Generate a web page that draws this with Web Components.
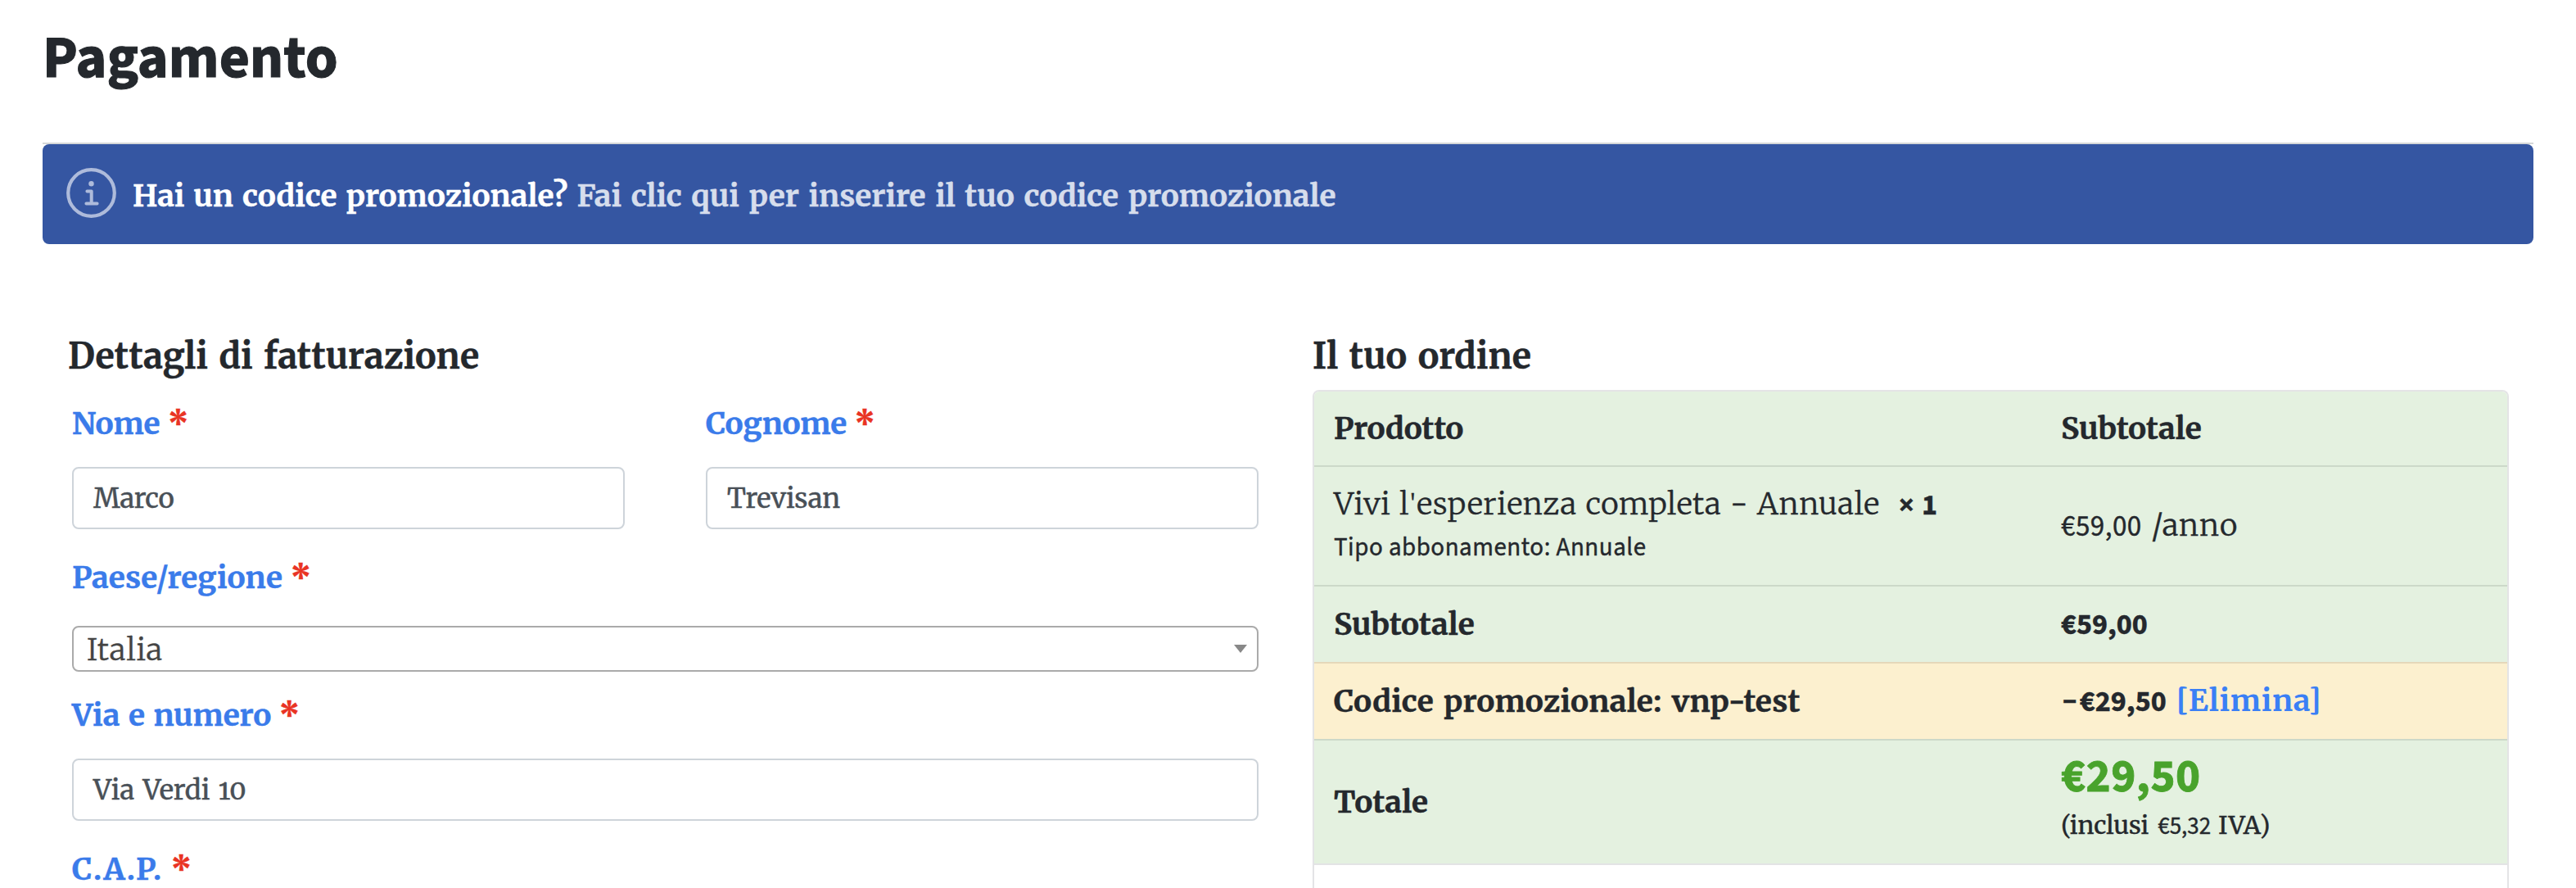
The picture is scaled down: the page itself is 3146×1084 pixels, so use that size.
<!DOCTYPE html>
<html lang="it"><head><meta charset="utf-8"><title>Pagamento</title>
<style>
html,body{margin:0;height:1084px;overflow:hidden;background:#fff}
body{--serif:Merriweather,"DejaVu Serif Condensed",serif;--sans:"Source Sans 3","Noto Sans CJK JP",sans-serif;font-family:var(--serif);font-size:37px;color:#24282d;-webkit-text-stroke:.4px currentColor}
</style></head><body>
<checkout-page>
<promo-banner slot="banner"></promo-banner>
<billing-form slot="billing"></billing-form>
<order-review slot="order"></order-review>
</checkout-page>
<script>
const define=(name,html)=>customElements.define(name,class extends HTMLElement{
  connectedCallback(){
    if(this.shadowRoot)return;
    this.attachShadow({mode:'open'}).innerHTML=typeof html==='function'?html(this):html;
  }
});

define('checkout-page',`<style>
:host{display:block;box-sizing:border-box;width:3146px;height:1084px;padding:31px 52px 0;overflow:hidden}
h1{margin:0 0 62px;font:700 72px/81px var(--sans);letter-spacing:.1px;-webkit-text-stroke:1px currentColor}
main{display:flex;padding:111px 30px 0 31px;gap:66px}
.left{width:1454px;flex:none}.right{flex:none;width:1461px}
</style><h1>Pagamento</h1><slot name="banner"></slot>
<main><div class="left"><slot name="billing"></slot></div><div class="right"><slot name="order"></slot></div></main>`);

define('info-icon',`<style>:host{display:block;width:61px;height:61px}svg{display:block}</style>
<svg width="61" height="61" viewBox="0 0 61 61" fill="none" stroke="#aebbdb"><circle cx="30.5" cy="30.5" r="28.3" stroke-width="4.2"/><circle cx="30.5" cy="19.2" r="3.2" fill="#aebbdb" stroke="none"/><path d="M25.4 28.5H30.7V43.6M24.4 43.6H37.6" stroke-width="4" stroke-linecap="round" stroke-linejoin="round"/></svg>`);

define('promo-banner',`<style>
:host{display:block;border-top:2px solid #d5d7d8}
.bar{display:flex;align-items:center;box-sizing:border-box;height:122px;padding:0 29px;background:#3556a2;border-radius:8px;color:#fff}
info-icon{margin:0 20px 4px 0}
p{margin:3px 0 0;font-weight:700;line-height:56px;word-spacing:2.2px;white-space:nowrap}
a{color:#d6ddec;word-spacing:2.8px;-webkit-text-stroke-color:#d6ddec}
</style><div class="bar"><info-icon></info-icon><p>Hai un codice promozionale? <a>Fai clic qui per inserire il tuo codice promozionale</a></p></div>`);

define('form-field',e=>`<style>
:host{display:block}
label{display:block;padding-top:2px;font-weight:700;line-height:59px;color:#3a7bea;white-space:nowrap}
.l{letter-spacing:var(--ls,0);word-spacing:var(--ws,0)}
b{color:#e93323;margin-left:1px}
.box{box-sizing:border-box;height:76px;margin-top:23px;border:2px solid #ced4da;border-radius:8px;padding:1px 24px 0;font-size:33px;line-height:72px;color:#495057;font-variant-numeric:oldstyle-nums}
.v{letter-spacing:var(--vls,0);word-spacing:var(--vws,0)}
</style><label><span class="l">${e.getAttribute('label')}</span> <b>*</b></label>${e.hasAttribute('value')?`<div class="box"><span class="v">${e.getAttribute('value')}</span></div>`:'<slot></slot>'}`);

define('select-box',`<style>
:host{display:flex;justify-content:space-between;align-items:center;box-sizing:border-box;height:56px;margin-top:29px;border:2px solid #aaa;border-radius:8px;padding:0 12px 0 16px;font-weight:300;line-height:52px;letter-spacing:.8px;color:#444}
span{padding-top:1px}
svg{display:block;margin-bottom:1px}
</style><span><slot></slot></span><svg width="16" height="10"><path d="M0 0H16L8 10Z" fill="#888"/></svg>`);

define('billing-form',`<style>
:host{display:block}
h3{margin:0 0 25px;font-size:43px;line-height:52px;font-weight:700;word-spacing:3.3px}
.grid{display:grid;grid-template-columns:675px 675px;justify-content:space-between;row-gap:28px;padding:0 0 0 5px}
.wide{grid-column:1/3}
.country{margin-bottom:-6px}
</style><h3>Dettagli di fatturazione</h3>
<div class="grid">
<form-field label="Nome" value="Marco" style="--ls:-.2px;--vls:-.3px"></form-field>
<form-field label="Cognome" value="Trevisan" style="--ls:-.3px;--vls:-.3px"></form-field>
<form-field class="wide country" label="Paese/regione" style="--ls:.1px"><select-box>Italia</select-box></form-field>
<form-field class="wide" label="Via e numero" value="Via Verdi 10" style="--ws:1.8px;--vws:2.6px"></form-field>
<form-field class="wide" label="C.A.P." style="--ls:1.9px"></form-field>
</div>`);

define('order-row',`<style>
:host{display:grid;grid-template-columns:912px 1fr;align-items:center;box-sizing:border-box;height:94px;padding-bottom:2px;background:#e4f1e0;box-shadow:inset 0 -2px var(--line,#ccd9c9)}
:host([coupon]){background:#fcf0cf}
.a{padding-left:24px}
div{white-space:nowrap}
</style><div class="a"><slot name="name"></slot></div><div class="b"><slot name="value"></slot></div>`);

define('order-review',`<style>
:host{display:block}
h3{margin:0 0 15px;font-size:43px;line-height:52px;font-weight:700;word-spacing:3.4px}
.table{box-sizing:border-box;border:2px solid #e4e4e6;border-bottom:0;border-radius:8px 8px 0 0;overflow:hidden;height:608px;line-height:54px}
[slot]{display:block}
.bold{font-weight:700}
.price{font:700 36px/1 var(--sans)}
.head{height:92px}
.item{height:146px}
.total{height:152px;--line:#e3e4e5}
.product{padding-bottom:3px}
.title{font-weight:300;letter-spacing:.57px;word-spacing:1.5px}
.apos{font-family:"Noto Serif",serif;margin:0 1px}
.qty{margin-left:23px;word-spacing:2px}
.meta{font:450 31px/52px var(--sans);letter-spacing:.5px}
.rate{font-weight:300;padding-bottom:3px}
.rate .amount{font:450 35px/1 var(--sans);letter-spacing:.5px}
.rate .per{margin-left:3px;letter-spacing:.8px}
.amt{padding-bottom:2px}
.code{word-spacing:2.8px;letter-spacing:.2px}
.off{margin-left:1.5px}
a{color:#3a7ff5;-webkit-text-stroke:0;letter-spacing:.75px;margin-left:3px}
.sum{padding-bottom:4px}
.grand{padding-top:1px;font:700 57px/60px var(--sans);letter-spacing:.5px;color:#49a32c;-webkit-text-stroke:.8px #49a32c}
.tax{font-size:30px;line-height:57px}
.tax .n{margin-left:4px;font:400 29px/1 var(--sans)}
.tax .iva{margin-left:2px;letter-spacing:1px}
</style><h3>Il tuo ordine</h3>
<div class="table">
<order-row class="head"><span slot="name" class="bold" style="letter-spacing:-.26px">Prodotto</span><span slot="value" class="bold">Subtotale</span></order-row>
<order-row class="item"><div slot="name" class="product"><div><span class="title">Vivi l<span class="apos">'</span>esperienza completa - Annuale</span><span class="price qty">× 1</span></div><div class="meta">Tipo abbonamento: Annuale</div></div>
<div slot="value" class="rate"><span class="amount">€59,00</span> <span class="per">/anno</span></div></order-row>
<order-row style="--line:#e5d8ba"><span slot="name" class="bold">Subtotale</span><span slot="value" class="bold amt"><span class="price">€59,00</span></span></order-row>
<order-row coupon><span slot="name" class="bold code">Codice promozionale: vnp-test</span><span slot="value" class="bold amt">-<span class="price off">€29,50</span> <a>[Elimina]</a></span></order-row>
<order-row class="total"><span slot="name" class="bold">Totale</span><div slot="value" class="sum"><div class="grand">€29,50</div><div class="tax">(inclusi <span class="n">€5,32</span> <span class="iva">IVA)</span></div></div></order-row>
</div>`);
</script></body></html>
